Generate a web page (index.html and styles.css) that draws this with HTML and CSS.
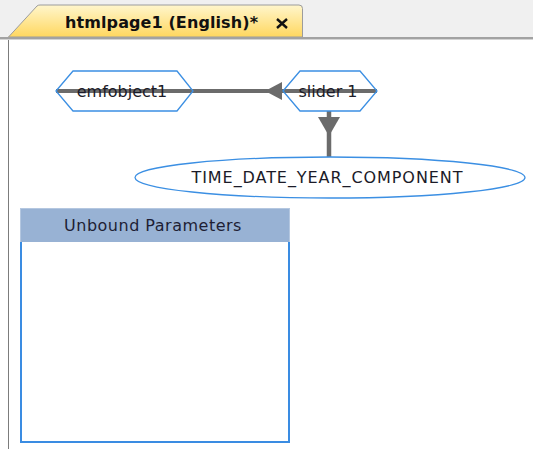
FILE: index.html
```html
<!DOCTYPE html>
<html lang="en">
<head>
  <meta charset="UTF-8">
  <title>htmlpage1 (English)*</title>
  <link rel="stylesheet" href="styles.css">
</head>
<body>
  <div class="tabstrip">
    <div class="tab">
      <svg class="tab-shape" width="300" height="37" viewBox="0 0 300 37">
        <defs>
          <linearGradient id="tabfill" x1="0" y1="0" x2="0" y2="1">
            <stop offset="0" stop-color="#fff6cc"/>
            <stop offset="1" stop-color="#ffd75f"/>
          </linearGradient>
        </defs>
        <path d="M0.5 37 L29 6 Q30 5 32 5 L291 5 Q294.5 5 294.5 8.5 L294.5 37 Z" fill="url(#tabfill)" stroke="#9c9c9c"/>
      </svg>
      <span class="tab-label">htmlpage1 (English)*</span>
      <svg class="tab-close" width="12" height="11" viewBox="0 0 12 11">
        <path d="M1 1 L11 10 M11 1 L1 10" stroke="#111" stroke-width="2.4"/>
      </svg>
    </div>
  </div>
  <div class="canvas">
    <svg class="diagram" width="524" height="165" viewBox="0 0 524 165">
      <line x1="47" y1="51" x2="368" y2="51" stroke="#6b6b6b" stroke-width="4"/>
      <polygon points="256,51 273,42 273,60" fill="#6b6b6b"/>
      <line x1="320" y1="71" x2="320" y2="117" stroke="#6b6b6b" stroke-width="4.5"/>
      <polygon points="309,77 331,77 320,96" fill="#6b6b6b"/>

      <polygon points="47,51 64,31 168,31 184,51 168,71 64,71" fill="none" stroke="#3b8fe3" stroke-width="1.3"/>
      <polygon points="274,51 291,31 351,31 368,51 351,71 291,71" fill="none" stroke="#3b8fe3" stroke-width="1.3"/>
      <ellipse cx="321" cy="137.5" rx="195" ry="20.5" fill="#fff" stroke="#3b8fe3" stroke-width="1.3"/>

      <text class="node-text" x="113" y="56.5" text-anchor="middle">emfobject1</text>
      <text class="node-text" x="319" y="56.5" text-anchor="middle">slider 1</text>
      <text class="node-text" x="318" y="143" text-anchor="middle" textLength="271" lengthAdjust="spacing">TIME_DATE_YEAR_COMPONENT</text>
    </svg>
    <div class="panel">
      <div class="panel-head">Unbound Parameters</div>
      <div class="panel-body"></div>
    </div>
  </div>
</body>
</html>
```

FILE: styles.css
```css
html, body {
  margin: 0;
  padding: 0;
  background-color: #ffffff;
}

body {
  width: 533px;
  height: 449px;
  overflow: hidden;
  font-family: "DejaVu Sans", Verdana, sans-serif;
  color: #1b1b24;
}

.tabstrip {
  height: 37px;
  background-color: #f0f0f0;
  border-bottom: 2px solid #a2a2a2;
  box-shadow: 0 1px 0 #d4d4d4;
  padding-left: 8px;
  display: flex;
  align-items: flex-end;
}

.tab {
  position: relative;
  width: 295px;
  height: 37px;
  display: flex;
  align-items: center;
  padding-top: 7px;
  box-sizing: border-box;
}

.tab-shape {
  position: absolute;
  left: 0;
  top: 0;
}

.tab-label {
  position: relative;
  margin-left: 57px;
  font-weight: bold;
  font-size: 16px;
  color: #111111;
  letter-spacing: 0.1px;
}

.tab-close {
  position: relative;
  margin-left: 18px;
  margin-top: 2px;
}

.canvas {
  margin-left: 8px;
  margin-top: 1px;
  height: 411px;
  border-left: 1px solid #7c7c7c;
  position: relative;
}

.diagram {
  display: block;
}

.node-text {
  font-family: "DejaVu Sans", Verdana, sans-serif;
  font-size: 16px;
  fill: #1b1b28;
}

.panel {
  margin-left: 11px;
  margin-top: 3px;
  width: 270px;
  height: 235px;
  display: flex;
  flex-direction: column;
}

.panel-head {
  height: 34px;
  background-color: #98b2d4;
  border: 1px solid #b4c7e0;
  border-bottom: none;
  box-sizing: border-box;
  display: flex;
  align-items: center;
  justify-content: center;
  font-size: 16px;
  letter-spacing: 0.5px;
  color: #1e1e34;
  padding-right: 4px;
}

.panel-body {
  flex: 1;
  border: 2px solid #3a8ce2;
  border-top: none;
}
```
